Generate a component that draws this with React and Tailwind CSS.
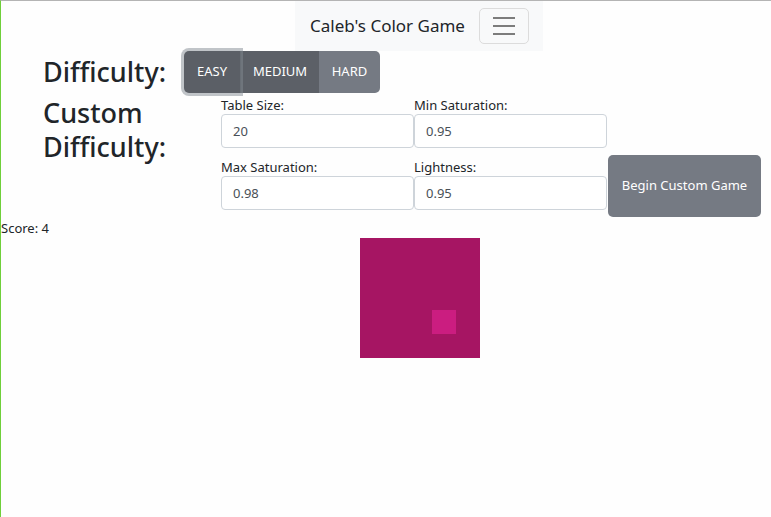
import React from 'react';

const font = { fontFamily: '"Noto Sans", "Open Sans", sans-serif' };

function Field({ label, value }) {
  return (
    <div className="flex flex-col w-[193px]">
      <label className="text-[13px] leading-[20px] text-[#212529] h-[19px]">{label}</label>
      <input
        readOnly
        value={value}
        className="h-[34px] w-full border border-[#ced4da] rounded-[4px] px-[11px] text-[13px] text-[#495057] bg-white outline-none"
      />
    </div>
  );
}

export default function App() {
  // 5x5 board, one odd tile
  const cells = Array.from({ length: 25 }, (_, i) => i);
  return (
    <div
      className="min-h-screen bg-[#fefefe] border-l border-l-[#6fcf3a] border-t border-t-[#b4b4b4] text-[#212529]"
      style={{ ...font, minHeight: 517 }}
    >
      {/* Navbar */}
      <div className="flex">
        <div className="ml-[294px] w-[248px] h-[50px] bg-[#f8f9fa] flex items-center justify-between pl-[15px] pr-[14px]">
          <span className="text-[17px] text-[#212529] whitespace-nowrap">Caleb's Color Game</span>
          <button className="w-[50px] h-[36px] border border-[#dcdcdc] rounded-[5px] flex flex-col items-center justify-center gap-[6px]">
            <span className="block w-[22px] h-[2px] bg-[#7c7c7c]" />
            <span className="block w-[22px] h-[2px] bg-[#7c7c7c]" />
            <span className="block w-[22px] h-[2px] bg-[#7c7c7c]" />
          </button>
        </div>
      </div>

      {/* Difficulty */}
      <div className="flex items-start h-[43px]">
        <h3 className="pl-[42px] w-[183px] text-[27px] font-medium leading-[34px] whitespace-nowrap pt-[4px]">Difficulty:</h3>
        <div className="flex h-[42px] text-white text-[13px]">
          <button className="relative z-10 w-[56px] bg-[#5b5f66] rounded-l-[5px] shadow-[0_0_0_3px_rgba(130,138,145,0.5)]">EASY</button>
          <button className="w-[79px] bg-[#5c6067] border-l border-[#50545a]">MEDIUM</button>
          <button className="w-[61px] bg-[#757a83] rounded-r-[5px]">HARD</button>
        </div>
      </div>

      {/* Custom difficulty */}
      <div className="flex mt-[1px]">
        <h3 className="pl-[42px] w-[220px] text-[27px] font-medium leading-[34px] pt-[1px]">
          Custom
          <br />
          Difficulty:
        </h3>
        <div className="flex items-end">
          <div className="grid grid-cols-2 gap-y-[9px]">
            <Field label="Table Size:" value="20" />
            <Field label="Min Saturation:" value="0.95" />
            <Field label="Max Saturation:" value="0.98" />
            <Field label="Lightness:" value="0.95" />
          </div>
          <button className="ml-[1px] mb-[-7px] w-[153px] h-[62px] rounded-[5px] bg-[#757a83] text-white text-[13px]">
            Begin Custom Game
          </button>
        </div>
      </div>

      <div className="mt-[9px] text-[13px] leading-[18px]">Score: 4</div>

      {/* Board */}
      <div className="ml-[359px] mt-[1px] grid grid-cols-5 w-[120px]">
        {cells.map((i) => (
          <div
            key={i}
            className={i === 18 ? 'h-[24px] bg-[#cb1d80]' : 'h-[24px] bg-[#a61563]'}
          />
        ))}
      </div>
    </div>
  );
}
